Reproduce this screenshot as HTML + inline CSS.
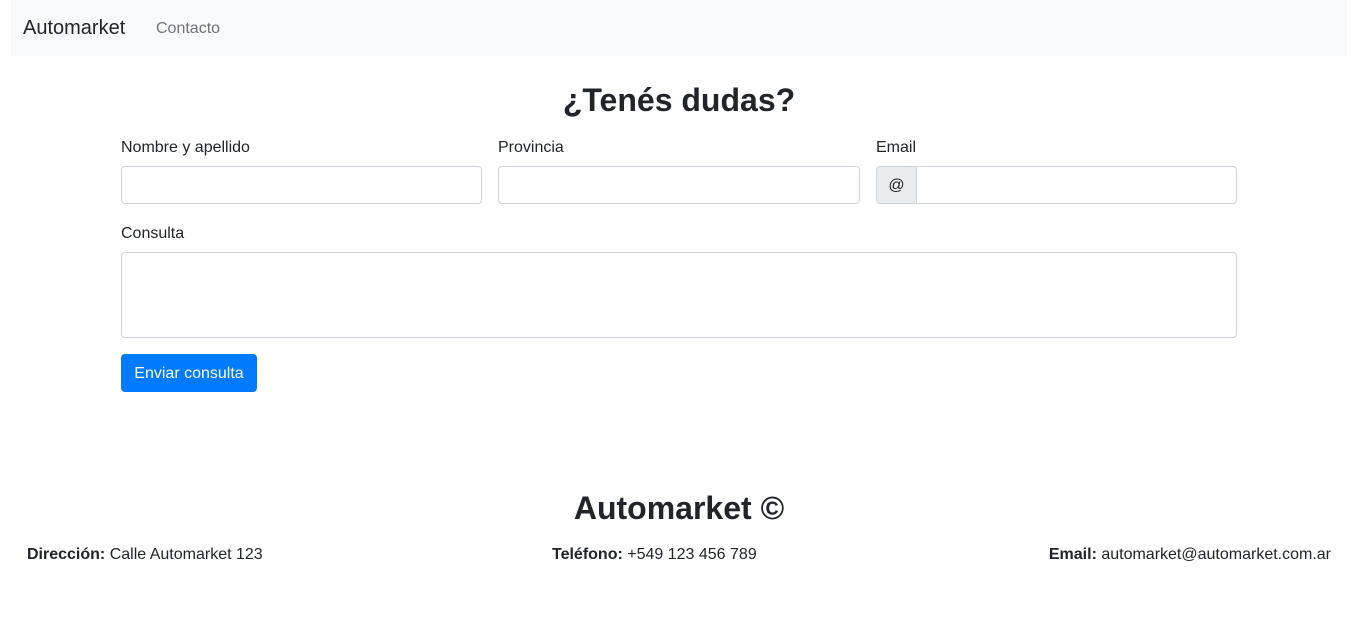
<!DOCTYPE html>
<html><head><meta charset="utf-8"><style>
*{box-sizing:border-box;margin:0;padding:0}
body{width:1358px;height:628px;background:#fff;font-family:"Liberation Sans",sans-serif;color:#212529;font-size:16px;position:relative;overflow:hidden}
.nav{position:absolute;left:11px;top:0;width:1336px;height:56px;background:#f8f9fa}
.brand{position:absolute;left:12px;top:17px;font-size:20px;color:#212529}
.link{position:absolute;left:145px;top:20px;font-size:16px;color:rgba(0,0,0,.55)}
h1{position:absolute;left:0;width:1358px;text-align:center;font-size:32px;font-weight:700}
.lbl{position:absolute;font-size:16px;top:139px}
.inp{position:absolute;top:166px;height:38px;border:1px solid #ced4da;border-radius:4px;background:#fff}
.at{position:absolute;left:876px;top:166px;width:41px;height:38px;background:#e9ecef;border:1px solid #ced4da;border-radius:4px 0 0 4px;text-align:center;line-height:38px}
.btn{position:absolute;left:121px;top:354px;width:136px;height:38px;background:#007bff;color:#fff;border-radius:4px;line-height:39px;text-align:center}
.f{position:absolute;top:546px;font-size:16px}
</style></head><body>
<div class="nav"><span class="brand">Automarket</span><span class="link">Contacto</span></div>
<h1 style="top:82px">¿Tenés dudas?</h1>
<div class="lbl" style="left:121px">Nombre y apellido</div>
<div class="lbl" style="left:498px">Provincia</div>
<div class="lbl" style="left:876px">Email</div>
<div class="inp" style="left:121px;width:361px"></div>
<div class="inp" style="left:498px;width:362px"></div>
<div class="inp" style="left:916px;width:321px;border-radius:0 4px 4px 0"></div>
<div class="at">@</div>
<div class="lbl" style="left:121px;top:225px">Consulta</div>
<div class="inp" style="left:121px;top:252px;width:1116px;height:86px"></div>
<div class="btn">Enviar consulta</div>
<h1 style="top:490px">Automarket ©</h1>
<div class="f" style="left:27px"><b>Dirección:</b> Calle Automarket 123</div>
<div class="f" style="left:552px"><b>Teléfono:</b> +549 123 456 789</div>
<div class="f" style="right:27px"><b>Email:</b> automarket@automarket.com.ar</div>
</body></html>
